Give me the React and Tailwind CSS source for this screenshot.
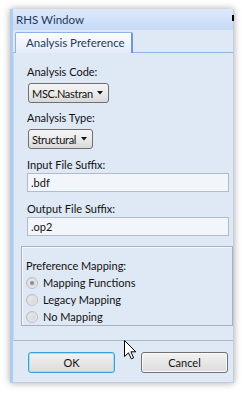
import React from "react";

function Dropdown({ label, width }) {
  return (
    <div
      className={`flex items-center justify-between h-[20px] ${width} ml-[1px] rounded-[3px] border border-[#707070] bg-gradient-to-b from-[#f4f4f4] via-[#ebebeb] to-[#d9d9d9] pl-[3px] pr-[5px] text-[#111]`}
    >
      <span className="leading-none whitespace-nowrap tracking-[-0.3px]">{label}</span>
      <svg width="6" height="4" viewBox="0 0 6 4">
        <path d="M0 0 H6 L3 3.5 Z" fill="#111" />
      </svg>
    </div>
  );
}

function Field({ value }) {
  return (
    <div className="flex items-center h-[19px] w-[202px] border border-[#b1bccb] bg-[#f2f5fa] pl-[3px] text-[#111]">
      {value}
    </div>
  );
}

function Radio({ checked, label }) {
  return (
    <div className="flex items-center h-[17px] gap-[5px]">
      <div className="flex items-center justify-center w-[12px] h-[12px] rounded-full border border-[#b9bcc1] bg-gradient-to-br from-[#d4d6da] to-[#f4f4f4]">
        <div className="flex items-center justify-center w-[8px] h-[8px] rounded-full bg-gradient-to-br from-[#e9eaec] to-[#d3d6da]">
          {checked && <div className="w-[4px] h-[4px] rounded-full bg-[#8a8d92]" />}
        </div>
      </div>
      <span className="text-[#111]">{label}</span>
    </div>
  );
}

export default function App() {
  return (
    <div className="relative w-[242px] h-[394px] bg-white pt-[9px] pl-[10px] font-['Lato',sans-serif] text-[11px] leading-[16px] whitespace-nowrap">
      <div className="flex flex-col w-[224px] h-[374px] bg-[#dfe8f5] border-l-[3px] border-l-[#b0cbee] border-r border-b border-r-[#c3ccd8] border-b-[#c3ccd8] shadow-[0_0_7px_rgba(0,0,0,0.35)]">
        {/* title */}
        <div className="flex items-center h-[21px] pl-[3px] bg-gradient-to-b from-[#dde9fa] to-[#c6dbf7] text-[#1e395b] text-[11.5px]">
          RHS Window
        </div>
        {/* tab strip */}
        <div className="flex items-end h-[22px] pl-[2px] bg-[#dfe8f5]">
          <div className="relative z-10 -mb-px flex items-center h-[21px] w-[118px] pl-[10px] border border-b-0 border-[#8fb3e3] border-r-[#6f98d2] border-r-2 rounded-t-[2px] bg-gradient-to-b from-[#fbfdff] to-[#e3ecf8] text-[#1e395b] text-[11.5px]">
            Analysis Preference
          </div>
        </div>
        {/* pane */}
        <div className="flex flex-col h-[289px] border-t border-t-[#8fb3e3] border-l border-l-[#c7d8ee] border-b border-b-[#a9b6c7] pl-[7px]">
          <div className="flex flex-col pl-[6px] pt-[11px]">
            <div className="text-[#111]">Analysis Code:</div>
            <div className="mt-[3px]">
              <Dropdown label="MSC.Nastran" width="w-[81px]" />
            </div>
            <div className="mt-[7px] text-[#111]">Analysis Type:</div>
            <div className="mt-[3px]">
              <Dropdown label="Structural" width="w-[65px]" />
            </div>
            <div className="mt-[8px] text-[#111]">Input File Suffix:</div>
            <Field value=".bdf" />
            <div className="mt-[9px] text-[#111]">Output File Suffix:</div>
            <Field value=".op2" />
          </div>
          <div className="mt-[10px] h-[80px] w-[212px] border border-[#a7b0bc] shadow-[inset_1px_1px_0_#f4f7fb] pl-[4px] pt-[11px]">
            <div className="text-[#111]">Preference Mapping:</div>
            <Radio checked label="Mapping Functions" />
            <Radio label="Legacy Mapping" />
            <Radio label="No Mapping" />
          </div>
        </div>
        {/* buttons */}
        <div className="flex gap-[26px] pl-[15px] pt-[11px]">
          <div className="flex items-center justify-center w-[87px] h-[21px] rounded-[3px] border border-[#3c9fd0] shadow-[inset_0_0_0_1px_#a6dcf4] bg-gradient-to-b from-[#f2f2f2] to-[#dcdcdc] text-[#111]">
            OK
          </div>
          <div className="flex items-center justify-center w-[87px] h-[21px] rounded-[3px] border border-[#707070] shadow-[inset_0_0_0_1px_#fafafa] bg-gradient-to-b from-[#f2f2f2] to-[#dcdcdc] text-[#111]">
            Cancel
          </div>
        </div>
      </div>
      {/* close button sliver */}
      <div className="absolute left-[232px] top-[15px] w-[2px] h-[6px] bg-black" />
      {/* mouse cursor */}
      <svg className="absolute left-[124px] top-[340px]" width="13" height="20" viewBox="0 0 13 20">
        <path d="M0.5 0.5 L0.5 16.5 L4.5 12.8 L7.3 18.8 L9.6 17.8 L6.9 11.8 L11.8 11.8 Z" fill="#fff" stroke="#000" strokeWidth="1" strokeLinejoin="miter" />
      </svg>
    </div>
  );
}
